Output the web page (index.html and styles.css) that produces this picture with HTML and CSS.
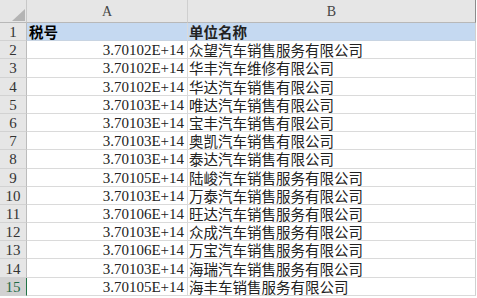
FILE: index.html
```html
<!DOCTYPE html>
<html lang="zh-CN">
<head>
<meta charset="utf-8">
<title>Sheet</title>
<link rel="stylesheet" href="styles.css">
</head>
<body>
<div class="sheet">
  <div class="corner"><span class="tri"></span></div>
  <div class="colhead">A</div>
  <div class="colhead colhead-last">B</div>

  <div class="rowhead">1</div>
  <div class="cell hdr">税号</div>
  <div class="cell hdr txt last">单位名称</div>

  <div class="rowhead">2</div>
  <div class="cell num">3.70102E+14</div>
  <div class="cell txt last">众望汽车销售服务有限公司</div>

  <div class="rowhead">3</div>
  <div class="cell num">3.70102E+14</div>
  <div class="cell txt last">华丰汽车维修有限公司</div>

  <div class="rowhead">4</div>
  <div class="cell num">3.70102E+14</div>
  <div class="cell txt last">华达汽车销售有限公司</div>

  <div class="rowhead">5</div>
  <div class="cell num">3.70103E+14</div>
  <div class="cell txt last">唯达汽车销售有限公司</div>

  <div class="rowhead">6</div>
  <div class="cell num">3.70103E+14</div>
  <div class="cell txt last">宝丰汽车销售有限公司</div>

  <div class="rowhead">7</div>
  <div class="cell num">3.70103E+14</div>
  <div class="cell txt last">奥凯汽车销售有限公司</div>

  <div class="rowhead">8</div>
  <div class="cell num">3.70103E+14</div>
  <div class="cell txt last">泰达汽车销售有限公司</div>

  <div class="rowhead">9</div>
  <div class="cell num">3.70105E+14</div>
  <div class="cell txt last">陆峻汽车销售服务有限公司</div>

  <div class="rowhead">10</div>
  <div class="cell num">3.70103E+14</div>
  <div class="cell txt last">万泰汽车销售服务有限公司</div>

  <div class="rowhead">11</div>
  <div class="cell num">3.70106E+14</div>
  <div class="cell txt last">旺达汽车销售服务有限公司</div>

  <div class="rowhead">12</div>
  <div class="cell num">3.70103E+14</div>
  <div class="cell txt last">众成汽车销售服务有限公司</div>

  <div class="rowhead">13</div>
  <div class="cell num">3.70106E+14</div>
  <div class="cell txt last">万宝汽车销售服务有限公司</div>

  <div class="rowhead">14</div>
  <div class="cell num">3.70103E+14</div>
  <div class="cell txt last">海瑞汽车销售服务有限公司</div>

  <div class="rowhead sel">15</div>
  <div class="cell num">3.70105E+14</div>
  <div class="cell txt last">海丰车销售服务有限公司</div>
</div>
</body>
</html>
```

FILE: styles.css
```css
* { box-sizing: border-box; }
html, body {
  margin: 0;
  padding: 0;
  background: #ffffff;
}
.sheet {
  display: grid;
  grid-template-columns: 27px 161px 288px;
  grid-template-rows: 23px repeat(15, 18.2px);
  width: 476px;
  font-family: "Liberation Serif", "Noto Sans CJK SC", serif;
  color: #000;
}
.corner {
  background: #e6e6e6;
  border-right: 1px solid #c8c8c8;
  border-bottom: 1px solid #b8b8b8;
  position: relative;
}
.tri {
  position: absolute;
  right: 1px;
  bottom: 1px;
  width: 0;
  height: 0;
  border-left: 13px solid transparent;
  border-bottom: 12px solid #b4b4b4;
}
.colhead {
  background: #e6e6e6;
  border-right: 1px solid #cfcfcf;
  border-bottom: 1px solid #b8b8b8;
  font-family: "Liberation Serif", serif;
  font-size: 14px;
  line-height: 16px;
  color: #444;
  display: flex;
  align-items: center;
  justify-content: center;
  padding-top: 2px;
}
.colhead-last {
  border-right: 1px solid #8c8c8c;
}
.rowhead {
  background: #e6e6e6;
  border-right: 1px solid #bcbcbc;
  border-bottom: 1px solid #d2d2d2;
  font-family: "Liberation Serif", serif;
  font-size: 15px;
  line-height: 16px;
  color: #333;
  display: flex;
  align-items: center;
  justify-content: center;
  padding-top: 1px;
}
.rowhead.sel {
  background: #d2d2d2;
  color: #1f6b45;
  border-right: 1px solid #217346;
}
.cell {
  border-right: 1px solid #dadada;
  border-bottom: 1px solid #dadada;
  display: flex;
  align-items: center;
  white-space: nowrap;
  line-height: 16px;
  padding-top: 1px;
}
.cell.last {
  border-right: 1px solid #d0d0d0;
}
.hdr {
  background: #c5d9f1;
  font-family: "Noto Sans CJK SC", sans-serif;
  font-weight: bold;
  font-size: 14.5px;
  padding-left: 2px;
  border-bottom-color: #c8d4e2;
}
.num {
  justify-content: flex-end;
  padding-right: 3px;
  font-family: "Liberation Serif", serif;
  font-size: 15px;
  color: #222;
}
.txt {
  font-family: "Noto Sans CJK SC", sans-serif;
  font-size: 14.5px;
  padding-left: 1px;
  color: #222;
}
```
